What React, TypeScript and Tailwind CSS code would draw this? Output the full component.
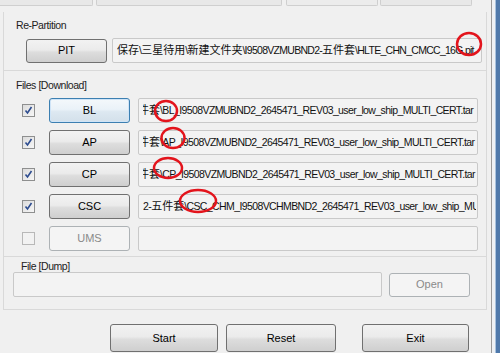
import React from "react";

const font = "font-['Tahoma','Liberation_Sans','Noto_Sans_CJK_SC',sans-serif]";

const btnBase =
  "flex items-center justify-center rounded-[3px] border text-[11px] leading-none";
const btnNormal =
  "border-[#707070] text-black bg-[linear-gradient(#f2f2f2,#ebebeb_45%,#dddddd_55%,#cfcfcf)]";
const btnFocus =
  "border-[#3c7fb1] text-black bg-[linear-gradient(#f4f8fb,#eaf2f8_45%,#dde8f1_55%,#d3e0ea)] shadow-[inset_0_0_0_1px_#cfe4f7]";
const btnDisabled = "border-[#adb2b5] text-[#8a8a8a] bg-[#f4f4f4]";

const Button = ({
  label,
  w,
  h = "h-[24px]",
  variant = "normal",
}: {
  label: string;
  w: string;
  h?: string;
  variant?: "normal" | "focus" | "disabled";
}) => (
  <div
    className={`${btnBase} ${w} ${h} shrink-0 ${
      variant === "focus" ? btnFocus : variant === "disabled" ? btnDisabled : btnNormal
    }`}
  >
    {label}
  </div>
);

const Check = ({ checked }: { checked: boolean }) => (
  <div
    className={`w-[13px] h-[13px] shrink-0 border ${
      checked
        ? "border-[#8e8f8f] bg-[linear-gradient(135deg,#dcdcdc,#f6f6f6)]"
        : "border-[#b8b8b8] bg-[#f2f2f2]"
    } flex items-center justify-center`}
  >
    {checked && (
      <svg width="9" height="9" viewBox="0 0 9 9">
        <path d="M1.5 4.5 L3.5 7 L7.5 1" fill="none" stroke="#2d4c8f" strokeWidth="1.6" />
      </svg>
    )}
  </div>
);

// read-only edit box; the inner div is the clipping viewport
const Field = ({ children, w }: { children?: React.ReactNode; w: string }) => (
  <div className={`${w} h-[25px] shrink-0 rounded-[2px] border border-[#c9c9c9] bg-[#f3f3f3] pl-[4px] pr-[1px] flex`}>
    <div className="flex-1 overflow-hidden whitespace-nowrap flex items-center text-[10.5px] text-[#111] tracking-[-0.6px]">
      {children}
    </div>
  </div>
);

// CJK pieces keep their natural width, latin pieces are squeezed like Tahoma
const Cjk = ({ children }: { children: React.ReactNode }) => (
  <span className="text-[11px] tracking-normal">{children}</span>
);

const Label = ({ children, pl }: { children: React.ReactNode; pl: string }) => (
  <div className={`h-[13px] ${pl} text-[10.5px] leading-[13px] tracking-[-0.45px] text-[#222]`}>{children}</div>
);

const rows = [
  { name: "BL", v: "focus" as const },
  { name: "AP", v: "normal" as const },
  { name: "CP", v: "normal" as const },
];

const tail = "_I9508VZMUBND2_2645471_REV03_user_low_ship_MULTI_CERT.tar";

const circles = [
  { cx: 469, cy: 44, rx: 12, ry: 11 },
  { cx: 166, cy: 111, rx: 11, ry: 10 },
  { cx: 173, cy: 138, rx: 11.5, ry: 10 },
  { cx: 168, cy: 168, rx: 14, ry: 10 },
  { cx: 198, cy: 201, rx: 18, ry: 11 },
];

export default function App() {
  return (
    <div className={`relative w-[500px] h-[353px] overflow-hidden bg-[#f0f0f0] flex ${font}`}>
      <div className="w-[491px] flex flex-col">
        {/* top strip */}
        <div className="h-[6px] flex">
          <div className="w-[93px] border-b border-r border-[#cfcfcf] bg-[#e8e8e8] rounded-br-[2px]" />
          <div className="w-[3px]" />
          <div className="w-[186px] border-b border-x border-[#cfcfcf] bg-[#e8e8e8] rounded-b-[2px]" />
          <div className="w-[4px]" />
          <div className="w-[92px] border-b border-x border-[#cfcfcf] bg-[#ececec] rounded-b-[2px]" />
          <div className="w-[2px]" />
          <div className="w-[92px] border-b border-x border-[#cfcfcf] bg-[#e8e8e8] rounded-b-[2px]" />
        </div>

        {/* panel */}
        <div className="mt-[6px] ml-[3px] w-[484px] border-l border-r border-[#d9d9d9] flex flex-col">
          {/* Re-Partition */}
          <div className="pt-[7px] border-b border-[#d9d9d9] pb-[7px]">
            <Label pl="pl-[12px]">Re-Partition</Label>
            <div className="mt-[6px] flex items-center">
              <div className="ml-[22px]">
                <Button label="PIT" w="w-[81px]" />
              </div>
              <div className="ml-[5px]">
                <Field w="w-[370px]">
                  <span className="tracking-[-0.72px]">
                    <Cjk>保存</Cjk>\<Cjk>三星待用</Cjk>\<Cjk>新建文件夹</Cjk>\I9508VZMUBND2-<Cjk>五件套</Cjk>
                    \HLTE_CHN_CMCC_16G.pit
                  </span>
                </Field>
              </div>
            </div>
          </div>

          {/* Files [Download] */}
          <div className="pt-[8px] pb-[5px] border-b border-[#d9d9d9]">
            <Label pl="pl-[12px]">Files [Download]</Label>
            <div className="mt-[6px] flex flex-col gap-[7px]">
              {rows.map((r) => (
                <div key={r.name} className="flex items-center h-[25px]">
                  <div className="ml-[18px]">
                    <Check checked />
                  </div>
                  <div className="ml-[14px]">
                    <Button label={r.name} w="w-[81px]" h="h-[25px]" variant={r.v} />
                  </div>
                  <div className="ml-[8px]">
                    <Field w="w-[340px]">
                      <span className="ml-[-5px]">
                        <Cjk>件套</Cjk>\{r.name}
                        {tail}
                      </span>
                    </Field>
                  </div>
                </div>
              ))}
              <div className="flex items-center h-[25px]">
                <div className="ml-[18px]">
                  <Check checked />
                </div>
                <div className="ml-[14px]">
                  <Button label="CSC" w="w-[81px]" h="h-[25px]" />
                </div>
                <div className="ml-[8px]">
                  <Field w="w-[340px]">
                    <span>
                      2-<Cjk>五件套</Cjk>\CSC_CHM_I9508VCHMBND2_2645471_REV03_user_low_ship_MULTI_CERT.tar
                    </span>
                  </Field>
                </div>
              </div>
              <div className="flex items-center h-[25px]">
                <div className="ml-[18px]">
                  <Check checked={false} />
                </div>
                <div className="ml-[14px]">
                  <Button label="UMS" w="w-[81px]" h="h-[25px]" variant="disabled" />
                </div>
                <div className="ml-[8px]">
                  <Field w="w-[340px]" />
                </div>
              </div>
            </div>
          </div>

          {/* File [Dump] */}
          <div className="pt-[3px] pb-[12px] border-b border-[#d9d9d9]">
            <div className="h-[12px] pl-[17px] text-[10.5px] leading-[12px] tracking-[-0.45px] text-[#222]">
              File [Dump]
            </div>
            <div className="flex items-center">
              <div className="ml-[9px]">
                <Field w="w-[369px]" />
              </div>
              <div className="ml-[7px]">
                <Button label="Open" w="w-[81px]" h="h-[24px]" variant="disabled" />
              </div>
            </div>
          </div>
        </div>

        {/* bottom buttons */}
        <div className="mt-[14px] flex">
          <div className="ml-[110px]">
            <Button label="Start" w="w-[108px]" h="h-[28px]" />
          </div>
          <div className="ml-[8px]">
            <Button label="Reset" w="w-[110px]" h="h-[28px]" />
          </div>
          <div className="ml-[26px]">
            <Button label="Exit" w="w-[107px]" h="h-[28px]" />
          </div>
        </div>
      </div>

      {/* window frame edge */}
      <div className="flex-1 flex">
        <div className="w-[1px] bg-[#9a9a9a]" />
        <div className="w-[3px] bg-[#eef1f5]" />
        <div className="w-[1px] bg-[#a8c2de]" />
        <div className="flex-1 bg-[#4f79ab]" />
      </div>

      {/* red annotation circles */}
      <svg className="absolute inset-0 pointer-events-none" width="500" height="353">
        {circles.map((c, i) => (
          <ellipse key={i} cx={c.cx} cy={c.cy} rx={c.rx} ry={c.ry} fill="none" stroke="#e3141c" strokeWidth="2.5" />
        ))}
      </svg>
    </div>
  );
}
